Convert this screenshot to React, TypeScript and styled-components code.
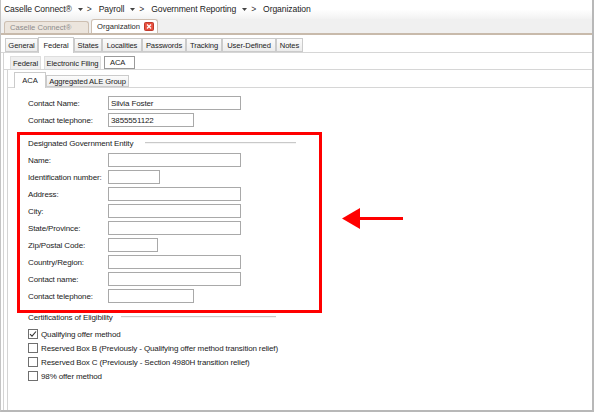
import styled, { createGlobalStyle } from "styled-components"

const Global = createGlobalStyle`
  html, body { margin: 0; padding: 0; background: #fff; }
  body { font-family: "Liberation Sans", Arial, sans-serif; color: #262626; }
  * { box-sizing: border-box; }
`

const Frame = styled.div`
  position: relative;
  width: 594px;
  height: 412px;
  display: flex;
  flex-direction: column;
  overflow: hidden;
  background: #fff;
  border-left: 1px solid #c4c4c4;
  border-right: 2px solid #b8b8b8;
  border-bottom: 2px solid #b8b8b8;
`

const Crumbs = styled.div`
  height: 19px;
  display: flex;
  align-items: center;
  padding: 0 0 1px 3px;
  font-size: 8.6px;
  letter-spacing: -0.1px;
  color: #1c1c1c;
  background: linear-gradient(#fff 50%, #f2f2f2);
`

const Crumb = styled.span`
  white-space: nowrap;
`

const Caret = styled.svg`
  width: 5px;
  height: 3px;
  margin: 1px 4px 0 6px;
`

const Sep = styled.span`
  margin-right: 7px;
  color: #333;
`

const WinTabs = styled.div`
  height: 16px;
  display: flex;
  align-items: flex-end;
  gap: 2px;
  padding-left: 3px;
  background: #f0f0f0;
  border-bottom: 2px solid #c8baab;
`

const WinTab = styled.div<{ $active?: boolean; $w: number }>`
  width: ${p => p.$w}px;
  height: ${p => (p.$active ? 14 : 12)}px;
  display: flex;
  align-items: center;
  justify-content: space-between;
  padding: 0 3px 0 5px;
  font-size: 7.6px;
  color: ${p => (p.$active ? "#2a2a2a" : "#8c8c8c")};
  background: ${p => (p.$active ? "#fff" : "#ece5dd")};
  border: 1px solid #cdbfb1;
  border-bottom: none;
  border-radius: 3px 3px 0 0;
`

const Close = styled.svg`
  width: 10px;
  height: 9px;
`

const TabRow = styled.div<{ $h: number; $pad: number; $top: number }>`
  height: ${p => p.$h + 1}px;
  margin-top: ${p => p.$top}px;
  display: flex;
  align-items: flex-end;
  padding-left: ${p => p.$pad}px;
  border-bottom: 1px solid #d6d6d6;
  flex-shrink: 0;
`

const Tab = styled.div<{ $active?: boolean; $w: number; $h: number }>`
  width: ${p => p.$w}px;
  height: ${p => (p.$active ? p.$h + 1 : p.$h - 1)}px;
  margin-bottom: ${p => (p.$active ? -1 : 0)}px;
  display: flex;
  align-items: center;
  justify-content: center;
  font-size: 7.6px;
  letter-spacing: -0.1px;
  white-space: nowrap;
  color: #222;
  background: ${p => (p.$active ? "#fff" : "linear-gradient(#fbfbfb, #ececec)")};
  border: 1px solid #cbcbcb;
  border-bottom: ${p => (p.$active ? "none" : "1px solid #cbcbcb")};
`

const SubTabs = styled.div`
  height: 15px;
  margin-top: 2px;
  display: flex;
  align-items: flex-end;
  gap: 3px;
  padding-left: 6px;
  border-bottom: 1px solid #d6d6d6;
  flex-shrink: 0;
`

const SubTab = styled.div<{ $active?: boolean; $w: number }>`
  width: ${p => p.$w}px;
  height: 13px;
  display: flex;
  align-items: center;
  padding-left: ${p => (p.$active ? 5 : 0)}px;
  justify-content: ${p => (p.$active ? "flex-start" : "center")};
  font-size: 7.6px;
  letter-spacing: -0.1px;
  white-space: nowrap;
  color: #222;
  background: ${p => (p.$active ? "#fff" : "#efefef")};
  border: 1px solid ${p => (p.$active ? "#9a9a9a" : "#dedede")};
  border-bottom: ${p => (p.$active ? "1px solid #9a9a9a" : "none")};
`

const Panel = styled.div<{ $ml: number }>`
  flex: 1;
  display: flex;
  flex-direction: column;
  margin-left: ${p => p.$ml}px;
  border-left: 1px solid #d4d4d4;
`

const Content = styled.div`
  padding: 8px 0 0 20px;
  display: flex;
  flex-direction: column;
  font-size: 8px;
  letter-spacing: -0.13px;
  color: #222;
`

const Row = styled.div`
  height: 14px;
  margin-bottom: 3px;
  display: flex;
  align-items: center;
`

const Label = styled.span`
  width: 80px;
  white-space: nowrap;
`

const Field = styled.div<{ $w: number }>`
  width: ${p => p.$w}px;
  height: 14px;
  display: flex;
  align-items: center;
  padding-left: 2px;
  border: 1px solid #a9a9a9;
  background: #fff;
  white-space: nowrap;
`

const GroupHead = styled.div<{ $top: number; $w: number }>`
  width: ${p => p.$w}px;
  height: 10px;
  margin: ${p => p.$top}px 0 5px;
  display: flex;
  align-items: center;
  white-space: nowrap;
`

const Rule = styled.div<{ $gap: number }>`
  flex: 1;
  margin-left: ${p => p.$gap}px;
  border-top: 1px solid #c9c9c9;
  border-bottom: 1px solid #f4f4f4;
`

const CheckRow = styled.div`
  height: 14px;
  display: flex;
  align-items: center;
  white-space: nowrap;
`

const Box = styled.div`
  width: 10px;
  height: 10px;
  margin-right: 3px;
  border: 1px solid #6f6f6f;
  background: #fff;
  display: flex;
  align-items: center;
  justify-content: center;
`

const Highlight = styled.div`
  position: absolute;
  left: 16px;
  top: 132px;
  width: 305px;
  height: 181px;
  border: 3px solid #ff0000;
  pointer-events: none;
`

const Arrow = styled.svg`
  position: absolute;
  left: 340px;
  top: 208px;
  width: 63px;
  height: 22px;
`

const crumbs = ["Caselle Connect®", "Payroll", "Government Reporting"]

const moduleTabs = [
  { name: "General", w: 33 },
  { name: "Federal", w: 36, active: true },
  { name: "States", w: 28 },
  { name: "Localities", w: 40 },
  { name: "Passwords", w: 44 },
  { name: "Tracking", w: 36 },
  { name: "User-Defined", w: 54 },
  { name: "Notes", w: 27 },
]

const contact = [
  { label: "Contact Name:", w: 133, value: "Silvia Foster" },
  { label: "Contact telephone:", w: 86, value: "3855551122" },
]

const entity = [
  { label: "Name:", w: 133 },
  { label: "Identification number:", w: 52 },
  { label: "Address:", w: 133 },
  { label: "City:", w: 133 },
  { label: "State/Province:", w: 133 },
  { label: "Zip/Postal Code:", w: 50 },
  { label: "Country/Region:", w: 133 },
  { label: "Contact name:", w: 133 },
  { label: "Contact telephone:", w: 86 },
]

const checks = [
  { label: "Qualifying offer method", checked: true },
  { label: "Reserved Box B (Previously - Qualifying offer method transition relief)" },
  { label: "Reserved Box C (Previously - Section 4980H transition relief)" },
  { label: "98% offer method" },
]

const CaretIcon = () => (
  <Caret viewBox="0 0 5 3">
    <path d="M0 0h5L2.5 3z" fill="#444" />
  </Caret>
)

export default function App() {
  return (
    <>
      <Global />
      <Frame>
        <Crumbs>
          {crumbs.map(c => (
            <span key={c} style={{ display: "contents" }}>
              <Crumb>{c}</Crumb>
              <CaretIcon />
              <Sep>&gt;</Sep>
            </span>
          ))}
          <Crumb>Organization</Crumb>
        </Crumbs>

        <WinTabs>
          <WinTab $w={85}>Caselle Connect®</WinTab>
          <WinTab $w={67} $active>
            Organization
            <Close viewBox="0 0 10 9">
              <rect x="0.5" y="0.5" width="9" height="8" rx="1" fill="#e8503f" stroke="#c03a2c" />
              <path d="M3 2.5l4 4M7 2.5l-4 4" stroke="#fff" strokeWidth="1.3" />
            </Close>
          </WinTab>
        </WinTabs>

        <TabRow $h={15} $pad={4} $top={2}>
          {moduleTabs.map(t => (
            <Tab key={t.name} $w={t.w} $h={15} $active={t.active}>
              {t.name}
            </Tab>
          ))}
        </TabRow>

        <Panel $ml={2}>
          <SubTabs>
            <SubTab $w={31}>Federal</SubTab>
            <SubTab $w={57}>Electronic Filing</SubTab>
            <SubTab $w={31} $active>ACA</SubTab>
          </SubTabs>

          <Panel $ml={3}>
            <TabRow $h={15} $pad={6} $top={2}>
              <Tab $w={32} $h={15} $active>ACA</Tab>
              <Tab $w={83} $h={13}>Aggregated ALE Group</Tab>
            </TabRow>

            <Content>
              {contact.map(f => (
                <Row key={f.label}>
                  <Label>{f.label}</Label>
                  <Field $w={f.w}>{f.value}</Field>
                </Row>
              ))}

              <GroupHead $top={8} $w={268}>
                Designated Government Entity
                <Rule $gap={12} />
              </GroupHead>
              {entity.map(f => (
                <Row key={f.label}>
                  <Label>{f.label}</Label>
                  <Field $w={f.w} />
                </Row>
              ))}

              <GroupHead $top={6} $w={248}>
                Certifications of Eligibility
                <Rule $gap={8} />
              </GroupHead>
              {checks.map(c => (
                <CheckRow key={c.label}>
                  <Box>
                    {c.checked && (
                      <svg width="8" height="8" viewBox="0 0 8 8">
                        <path d="M1 4.2l2 2L7 1.5" fill="none" stroke="#333" strokeWidth="1.1" />
                      </svg>
                    )}
                  </Box>
                  {c.label}
                </CheckRow>
              ))}
            </Content>
          </Panel>
        </Panel>

        <Highlight />
        <Arrow viewBox="0 0 63 22">
          <path d="M1 10.5L19 0v21z" fill="#ff0000" />
          <rect x="18" y="9" width="44" height="3" fill="#ff0000" />
        </Arrow>
      </Frame>
    </>
  )
}
